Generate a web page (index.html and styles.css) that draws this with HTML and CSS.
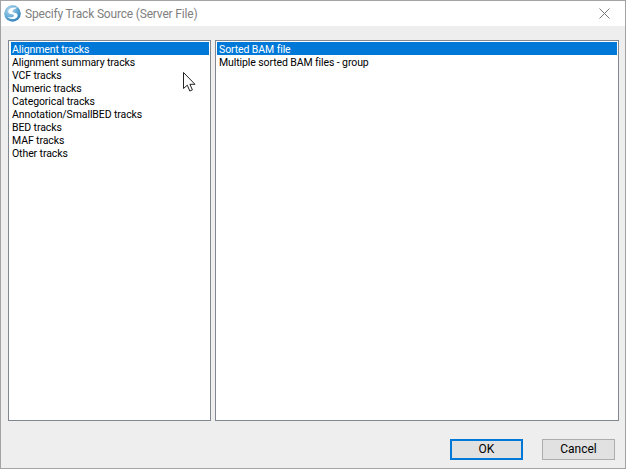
FILE: index.html
```html
<!DOCTYPE html>
<html lang="en">
<head>
<meta charset="utf-8">
<title>Specify Track Source (Server File)</title>
<link rel="stylesheet" href="styles.css">
</head>
<body>
<div class="window">
  <header class="titlebar">
    <svg class="app-icon" width="17" height="17" viewBox="0 0 16 16" aria-hidden="true">
      <defs>
        <radialGradient id="orb" cx="0.35" cy="0.3" r="0.85">
          <stop offset="0" stop-color="#b5d8ec"/>
          <stop offset="0.55" stop-color="#5fa8d4"/>
          <stop offset="1" stop-color="#1f6ea8"/>
        </radialGradient>
      </defs>
      <circle cx="8" cy="8" r="7.8" fill="url(#orb)"/>
      <path d="M12.4 2.6C8.6 1.8 4.2 3.2 4 6.2 3.8 9 9.4 8.4 9.4 10 9.4 11.4 6.4 12 3.2 11.4 6.2 14.4 12.4 13.4 12.8 10 13.1 7.2 7.8 7.6 7.8 6.2 7.8 4.8 10.2 3.8 12.4 2.6Z" fill="#fff"/>
    </svg>
    <span class="title">Specify Track Source (Server File)</span>
    <svg class="close" width="11" height="11" viewBox="0 0 11 11" aria-hidden="true">
      <path d="M0.5 0.5L10.5 10.5M10.5 0.5L0.5 10.5" stroke="#7a7a7a" stroke-width="1" fill="none"/>
    </svg>
  </header>
  <main class="panes">
    <ul class="list list-left">
      <li class="selected">Alignment tracks</li>
      <li>Alignment summary tracks</li>
      <li>VCF tracks</li>
      <li>Numeric tracks</li>
      <li>Categorical tracks</li>
      <li>Annotation/SmallBED tracks</li>
      <li>BED tracks</li>
      <li>MAF tracks</li>
      <li>Other tracks</li>
    </ul>
    <ul class="list list-right">
      <li class="selected">Sorted BAM file</li>
      <li>Multiple sorted BAM files - group</li>
    </ul>
  </main>
  <footer class="actions">
    <button class="btn btn-default" type="button">OK</button>
    <button class="btn" type="button">Cancel</button>
  </footer>
  <svg class="cursor" width="13" height="20" viewBox="0 0 13 20" aria-hidden="true">
    <path d="M0.5 0.5V16.5L4.3 13.2L6.8 19L9.4 17.9L6.9 12.3H12L0.5 0.5Z" fill="#fff" stroke="#222" stroke-width="1"/>
  </svg>
</div>
</body>
</html>
```
FILE: styles.css
```css
* { box-sizing: border-box; }
html, body { margin: 0; padding: 0; }
body {
  width: 626px;
  height: 469px;
  overflow: hidden;
  font-family: Roboto, "Open Sans", sans-serif;
  font-size: 10.5px;
  color: #000;
}
.window {
  position: relative;
  width: 626px;
  height: 469px;
  display: flex;
  flex-direction: column;
  background: #eeeeee;
  border: 1px solid #a3a3a3;
}
.titlebar {
  height: 25px;
  flex: none;
  display: flex;
  align-items: center;
  padding: 0 15px 0 3px;
  background: #fff;
}
.app-icon { flex: none; margin-right: 4px; }
.title {
  flex: 1;
  font-size: 12px;
  letter-spacing: -0.18px;
  color: #7f7f7f;
}
.close { flex: none; }
.panes {
  flex: none;
  height: 381px;
  margin: 14px 6px 0 7px;
  display: flex;
  gap: 4px;
}
.list {
  margin: 0;
  padding: 1px;
  list-style: none;
  background: #fff;
  border: 1px solid #828790;
  height: 100%;
}
.list-left { width: 203px; }
.list-right { width: 404px; }
.list li {
  height: 13px;
  line-height: 15px;
  padding-left: 2px;
  white-space: nowrap;
  letter-spacing: -0.1px;
}
.list-left li { margin-left: 1px; padding-left: 1px; }
.list .selected { background: #0078d7; color: #fff; }
.actions {
  flex: 1;
  display: flex;
  justify-content: flex-end;
  align-items: flex-start;
  gap: 19px;
  padding: 18px 10px 0 0;
}
.btn {
  width: 73px;
  height: 21px;
  padding: 0;
  font: inherit;
  font-size: 12px;
  line-height: 17px;
  color: #000;
  background: #e1e1e1;
  border: 1px solid #adadad;
}
.btn-default { border: 2px solid #0078d7; }
.cursor {
  position: absolute;
  left: 182px;
  top: 71px;
}
```
